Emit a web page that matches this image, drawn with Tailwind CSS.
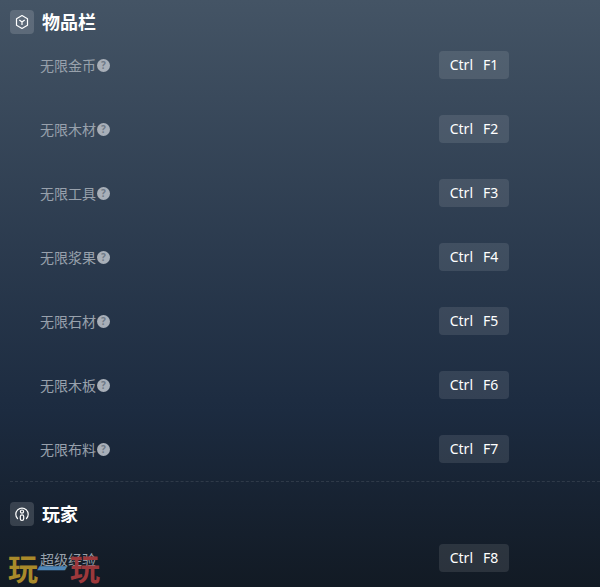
<!DOCTYPE html>
<html lang="en">
<head>
  <meta charset="UTF-8">
  <title>物品栏</title>
  <script src="https://cdn.jsdelivr.net/npm/@tailwindcss/browser@4"></script>
</head>
<body class="w-[600px] h-[587px] overflow-hidden relative bg-gradient-to-b from-[#445465] via-[#1c2b40] via-70% to-[#121a24] font-['Noto_Sans','Noto_Sans_CJK_SC',sans-serif]">
  <section class="pl-[10px] pt-[10px]">
    <div class="flex items-center h-6 gap-2">
      <div class="w-6 h-6 rounded bg-white/15 flex items-center justify-center">
        <svg width="16" height="16" viewBox="0 0 16 16" fill="none" stroke="white" stroke-width="1.2" stroke-linejoin="round"><path d="M8 1.5 13.5 4.7V11.3L8 14.5 2.5 11.3V4.7Z"/><path d="M5.3 6 8 8 10.7 6M8 8V11"/></svg>
      </div>
      <h2 class="text-[18px] font-bold text-white leading-6">物品栏</h2>
    </div>
    <div class="pt-[17px]">
      <div class="h-16 flex items-start pr-[91px] pl-[30px]">
        <div class="flex-1 flex items-center h-7 pt-px text-sm text-[#98a1ac]">无限金币<span class="ml-px w-[13px] h-[13px] rounded-full bg-[#a8afb8] text-[#6f7a87] text-[10px] font-bold leading-[13px] text-center">?</span></div>
        <div class="w-[70px] h-7 rounded bg-white/10 text-white text-sm flex items-center justify-center gap-[10px]"><span>Ctrl</span><span>F1</span></div>
      </div>
      <div class="h-16 flex items-start pr-[91px] pl-[30px]">
        <div class="flex-1 flex items-center h-7 pt-px text-sm text-[#98a1ac]">无限木材<span class="ml-px w-[13px] h-[13px] rounded-full bg-[#a8afb8] text-[#6f7a87] text-[10px] font-bold leading-[13px] text-center">?</span></div>
        <div class="w-[70px] h-7 rounded bg-white/10 text-white text-sm flex items-center justify-center gap-[10px]"><span>Ctrl</span><span>F2</span></div>
      </div>
      <div class="h-16 flex items-start pr-[91px] pl-[30px]">
        <div class="flex-1 flex items-center h-7 pt-px text-sm text-[#98a1ac]">无限工具<span class="ml-px w-[13px] h-[13px] rounded-full bg-[#a8afb8] text-[#6f7a87] text-[10px] font-bold leading-[13px] text-center">?</span></div>
        <div class="w-[70px] h-7 rounded bg-white/10 text-white text-sm flex items-center justify-center gap-[10px]"><span>Ctrl</span><span>F3</span></div>
      </div>
      <div class="h-16 flex items-start pr-[91px] pl-[30px]">
        <div class="flex-1 flex items-center h-7 pt-px text-sm text-[#98a1ac]">无限浆果<span class="ml-px w-[13px] h-[13px] rounded-full bg-[#a8afb8] text-[#6f7a87] text-[10px] font-bold leading-[13px] text-center">?</span></div>
        <div class="w-[70px] h-7 rounded bg-white/10 text-white text-sm flex items-center justify-center gap-[10px]"><span>Ctrl</span><span>F4</span></div>
      </div>
      <div class="h-16 flex items-start pr-[91px] pl-[30px]">
        <div class="flex-1 flex items-center h-7 pt-px text-sm text-[#98a1ac]">无限石材<span class="ml-px w-[13px] h-[13px] rounded-full bg-[#a8afb8] text-[#6f7a87] text-[10px] font-bold leading-[13px] text-center">?</span></div>
        <div class="w-[70px] h-7 rounded bg-white/10 text-white text-sm flex items-center justify-center gap-[10px]"><span>Ctrl</span><span>F5</span></div>
      </div>
      <div class="h-16 flex items-start pr-[91px] pl-[30px]">
        <div class="flex-1 flex items-center h-7 pt-px text-sm text-[#98a1ac]">无限木板<span class="ml-px w-[13px] h-[13px] rounded-full bg-[#a8afb8] text-[#6f7a87] text-[10px] font-bold leading-[13px] text-center">?</span></div>
        <div class="w-[70px] h-7 rounded bg-white/10 text-white text-sm flex items-center justify-center gap-[10px]"><span>Ctrl</span><span>F6</span></div>
      </div>
      <div class="h-[46px] flex items-start pr-[91px] pl-[30px]">
        <div class="flex-1 flex items-center h-7 pt-px text-sm text-[#98a1ac]">无限布料<span class="ml-px w-[13px] h-[13px] rounded-full bg-[#a8afb8] text-[#6f7a87] text-[10px] font-bold leading-[13px] text-center">?</span></div>
        <div class="w-[70px] h-7 rounded bg-white/10 text-white text-sm flex items-center justify-center gap-[10px]"><span>Ctrl</span><span>F7</span></div>
      </div>
    </div>
  </section>
  <section class="border-t border-dashed border-white/10 ml-[10px] pt-5">
    <div class="flex items-center h-6 gap-2">
      <div class="w-6 h-6 rounded bg-white/15 flex items-center justify-center">
        <svg width="16" height="16" viewBox="0 0 16 16" fill="none" stroke="white" stroke-width="1.2" stroke-linecap="round"><path d="M3.5 12.5A6.2 6.2 0 1 1 12.5 12.5"/><circle cx="8" cy="5.6" r="1.6"/><rect x="6.3" y="8.8" width="3.4" height="5.7" rx="1.7"/></svg>
      </div>
      <h2 class="text-[18px] font-bold text-white leading-6">玩家</h2>
    </div>
    <div class="flex items-start pr-[91px] pl-[30px] pt-[18px]">
      <div class="flex-1 flex items-center h-7 pt-[3px] text-sm text-[#98a1ac]">超级经验</div>
      <div class="w-[70px] h-7 rounded bg-white/10 text-white text-sm flex items-center justify-center gap-[10px]"><span>Ctrl</span><span>F8</span></div>
    </div>
  </section>
  <div class="absolute left-[8px] top-[552px] flex items-center font-['Noto_Sans_CJK_SC',serif] font-bold text-[30px] leading-[30px]">
    <span class="text-[#a98a2a]">玩</span><span class="text-[#4f86b8] w-[32px] -skew-x-[30deg]">一</span><span class="text-[#9c383b]">玩</span>
  </div>
</body>
</html>
